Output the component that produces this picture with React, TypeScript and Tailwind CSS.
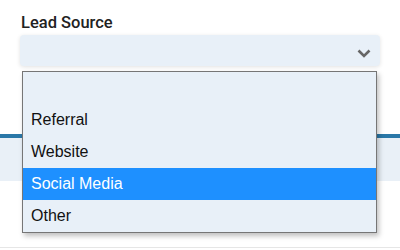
const options = ["", "Referral", "Website", "Social Media", "Other"];

export default function App() {
  const selected = "Social Media";

  return (
    <main className="relative h-[250px] w-[400px] overflow-hidden bg-white font-['Roboto',sans-serif]">
      {/* Field */}
      <div className="px-5 pt-[12px]">
        <label className="block pl-px text-[16.5px] font-medium leading-[21px] text-[#222]">
          Lead Source
        </label>
        <div className="mt-[2px] flex h-[31px] items-center justify-end rounded-[4px] bg-[#e8f0f8] pr-[9px] shadow-[0_1px_4px_rgba(0,0,0,0.12)]">
          <svg width="14" height="9" viewBox="0 0 14 9" className="mt-[5px]">
            <path d="M1.5 1.5 L7 7 L12.5 1.5" fill="none" stroke="#666" strokeWidth="2.6" />
          </svg>
        </div>
      </div>

      {/* Section behind the menu */}
      <div className="mt-[68px] h-[47px] border-t-4 border-[#2a78a8] bg-[#e9f0f7]" />
      <div className="mt-[66px] border-t border-[#e6e6e6]" />

      {/* Open select menu */}
      <ul className="absolute left-[22px] top-[71px] w-[355px] border border-[#767676] bg-[#e8f0f8] font-['Liberation_Sans',Arial,sans-serif] text-[16px] shadow-[2px_3px_5px_rgba(0,0,0,0.25)]">
        {options.map((o, i) => (
          <li
            key={i}
            className={
              o === selected
                ? "flex h-[32px] items-center bg-[#1e90ff] px-2 text-white"
                : "flex h-[32px] items-center px-2 text-[#111]"
            }
          >
            {o}
          </li>
        ))}
      </ul>
    </main>
  );
}
